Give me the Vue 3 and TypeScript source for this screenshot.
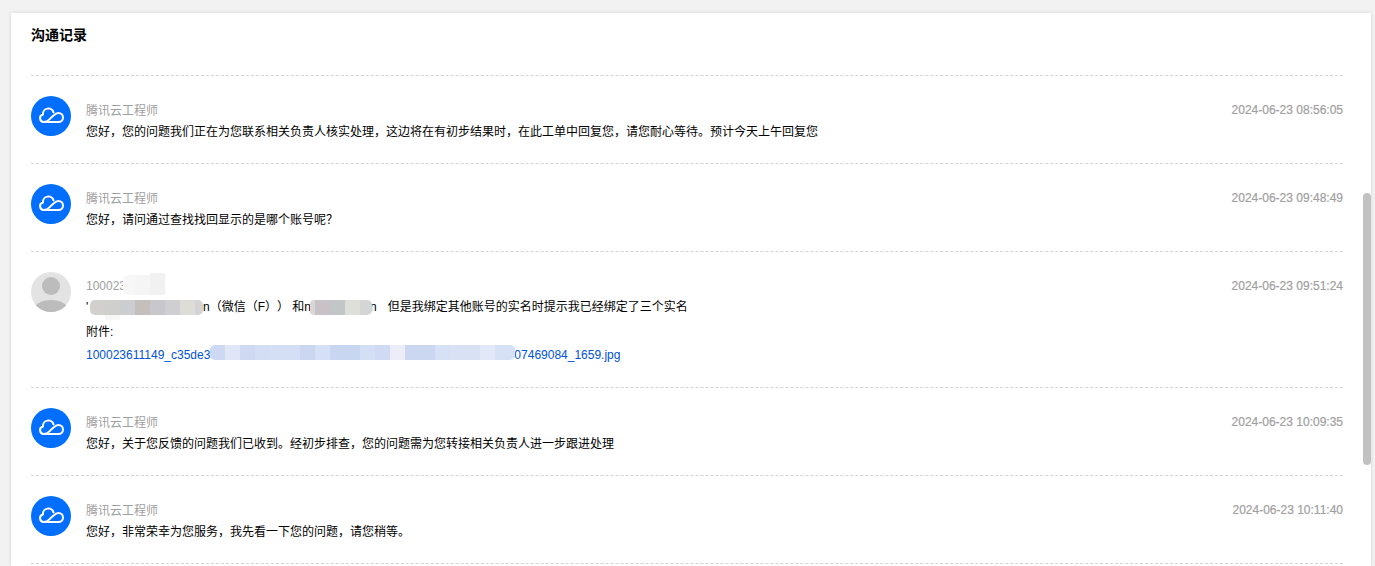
<script setup lang="ts">
interface Patch { x: number; y: number; w: number; h: number; color: string; radius?: string }

const ROW_X = 31
const ROW_Y = 252

const comma = '\uFF0C'
const question = '\uFF1F'
const lp = '\uFF08'
const rp = '\uFF09'

const engineer = '腾讯云工程师'

const firstRows = [
  { time: '2024-06-23 08:56:05', text: `您好${comma}您的问题我们正在为您联系相关负责人核实处理${comma}这边将在有初步结果时${comma}在此工单中回复您${comma}请您耐心等待。预计今天上午回复您` },
  { time: '2024-06-23 09:48:49', text: `您好${comma}请问通过查找找回显示的是哪个账号呢${question}` },
]
const lastRows = [
  { time: '2024-06-23 10:09:35', text: `您好${comma}关于您反馈的问题我们已收到。经初步排查${comma}您的问题需为您转接相关负责人进一步跟进处理` },
  { time: '2024-06-23 10:11:40', text: `您好${comma}非常荣幸为您服务${comma}我先看一下您的问题${comma}请您稍等。` },
]
const contact = `n${lp}微信${lp}F${rp}${rp} 和n`

const strip = (start: number, y: number, h: number, colors: string[], lastWidth: number): Patch[] =>
  colors.map((color, i) => ({
    x: start + i * 15,
    y,
    w: i === colors.length - 1 ? lastWidth : 15,
    h,
    color,
    radius: i === 0 ? '5px 0 0 5px' : i === colors.length - 1 ? '0 5px 5px 0' : '0',
  }))

const patches: Patch[] = [
  { x: 123, y: 275, w: 12, h: 20, color: '#f7f7f7', radius: '6px 0 0 6px' },
  { x: 135, y: 275, w: 15, h: 20, color: '#f5f5f5' },
  { x: 150, y: 273, w: 15, h: 22, color: '#f1f1f1' },
  ...strip(90, 300, 15, ['#d2cfcf', '#cfd0cd', '#cccdd1', '#c4bfba', '#c8c7cd', '#cfcfd2', '#dddcd7', '#d4d4d6'], 8),
  { x: 105, y: 315, w: 15, h: 5, color: '#f7f7f7' },
  { x: 310, y: 300, w: 5, h: 15, color: '#d8d6d6', radius: '4px 0 0 4px' },
  { x: 315, y: 300, w: 15, h: 15, color: '#c8c2c6' },
  { x: 330, y: 300, w: 15, h: 15, color: '#c3c6c6' },
  { x: 345, y: 300, w: 15, h: 15, color: '#dedfd9' },
  { x: 360, y: 300, w: 12, h: 15, color: '#d4d6d5', radius: '0 5px 5px 0' },
  ...strip(210, 345, 15, [
    '#cdd9f3', '#e0e6f7', '#cfd9f2', '#d3def5', '#d4dff6', '#d4dff6', '#cbd7f1', '#d5e0f7', '#c9d6f1', '#c9d6f1',
    '#d3dff4', '#d0daf3', '#ecedf9', '#cbd7f1', '#cbd7f1', '#d6e1f5', '#d9e2f5', '#d9e2f5', '#e2e8f7', '#d7e1f5',
  ], 20),
]

const patchStyle = (p: Patch) => ({
  left: `${p.x - ROW_X}px`,
  top: `${p.y - ROW_Y}px`,
  width: `${p.w}px`,
  height: `${p.h}px`,
  background: p.color,
  borderRadius: p.radius ?? '0',
})
</script>

<template>
  <div class="page">
    <section class="card">
      <h2 class="title">沟通记录</h2>
      <div class="list">
        <article v-for="row in firstRows" :key="row.time" class="row">
          <div class="avatar avatar-cloud">
            <svg viewBox="0 0 40 40" width="40" height="40" fill="none" stroke="#fff" stroke-width="2" stroke-linejoin="round" stroke-linecap="round">
              <path d="M12.800 26H27.500a4.500 4.500 0 0 0 0-9c-2 0-3.500 1.100-5 2.600l-3.800 3.500c-1.300 1.300-3 2.900-5.900 2.900z" />
              <path d="M12.800 26a3.800 3.800 0 0 1-.8-7.500A5.400 5.400 0 0 1 22.600 16.600" />
            </svg>
          </div>
          <div class="body">
            <div class="head"><span class="name cn">{{ engineer }}</span><span class="time">{{ row.time }}</span></div>
            <p class="msg cn">{{ row.text }}</p>
          </div>
        </article>

        <article class="row">
          <div class="avatar avatar-user">
            <svg viewBox="0 0 40 40" width="40" height="40">
              <circle cx="20" cy="14" r="9" fill="#bcbcbc" />
              <ellipse cx="20" cy="39" rx="18" ry="11" fill="#bcbcbc" />
            </svg>
          </div>
          <div class="body">
            <div class="head"><span class="name">100023</span><span class="time">2024-06-23 09:51:24</span></div>
            <p class="msg mixed"><span class="gap-a">'</span>{{ contact }}<span class="gap-b"></span>n<span class="gap-c"></span>但是我绑定其他账号的实名时提示我已经绑定了三个实名</p>
            <p class="msg attach cn">附件:</p>
            <p class="msg link-line"><a class="link">100023611149_c35de3<span class="gap-link"></span>07469084_1659.jpg</a></p>
          </div>
          <i v-for="p in patches" :key="`${p.x}-${p.y}`" class="patch" :style="patchStyle(p)"></i>
        </article>

        <article v-for="row in lastRows" :key="row.time" class="row">
          <div class="avatar avatar-cloud">
            <svg viewBox="0 0 40 40" width="40" height="40" fill="none" stroke="#fff" stroke-width="2" stroke-linejoin="round" stroke-linecap="round">
              <path d="M12.800 26H27.500a4.500 4.500 0 0 0 0-9c-2 0-3.500 1.100-5 2.600l-3.800 3.500c-1.300 1.300-3 2.900-5.900 2.900z" />
              <path d="M12.800 26a3.800 3.800 0 0 1-.8-7.500A5.400 5.400 0 0 1 22.600 16.600" />
            </svg>
          </div>
          <div class="body">
            <div class="head"><span class="name cn">{{ engineer }}</span><span class="time">{{ row.time }}</span></div>
            <p class="msg cn">{{ row.text }}</p>
          </div>
        </article>
      </div>
      <div class="scroll-thumb"></div>
    </section>
  </div>
</template>

<style>
html, body { margin: 0; overflow: hidden; background: #f2f2f2; }
</style>

<style scoped>
.page {
  height: 566px;
  padding: 13px 4px 0 11px;
  box-sizing: border-box;
  overflow: hidden;
  background: #f2f2f2;
  font-family: "Liberation Sans", "Noto Sans CJK SC", sans-serif;
  font-size: 12px;
  color: #000;
  text-spacing-trim: space-all;
}
.card {
  position: relative;
  background: #fff;
  height: 553px;
  padding: 0 28px 0 20px;
  box-shadow: 0 0 4px rgba(0, 0, 0, 0.12);
}
.title {
  margin: 0;
  height: 62px;
  padding-top: 13px;
  box-sizing: border-box;
  font-size: 14px;
  line-height: 18px;
  font-weight: 700;
}
.list { border-top: 1px dashed #d4d4d4; }
.row {
  position: relative;
  display: flex;
  gap: 15px;
  padding: 20px 0 22px;
  border-bottom: 1px dashed #d4d4d4;
}
.avatar {
  flex: none;
  width: 40px;
  height: 40px;
  border-radius: 50%;
  overflow: hidden;
}
.avatar svg { display: block; }
.avatar-cloud { background: #006eff; }
.avatar-user { background: #e3e3e3; }
.body { flex: 1; min-width: 0; }
.head { display: flex; justify-content: space-between; height: 20px; line-height: 20px; margin-top: 4px; }
.name { color: #a0a0a0; }
.time { color: #a0a0a0; -webkit-text-stroke: 0.2px #a0a0a0; }
.msg { margin: 1px 0 0; line-height: 20px; height: 20px; color: #000; }
.cn { line-height: 22px; }
.mixed { white-space: pre; }
.gap-a { display: inline-block; width: 117px; }
.gap-b { display: inline-block; width: 59px; }
.gap-c { display: inline-block; width: 11px; }
.attach, .link-line { margin-top: 4px; }
.link { color: #0052d9; }
.gap-link { display: inline-block; width: 304px; }
.patch { position: absolute; }
.scroll-thumb {
  position: absolute;
  top: 180px;
  right: 0;
  width: 8px;
  height: 272px;
  border-radius: 4px;
  background: #c1c1c1;
}
</style>
